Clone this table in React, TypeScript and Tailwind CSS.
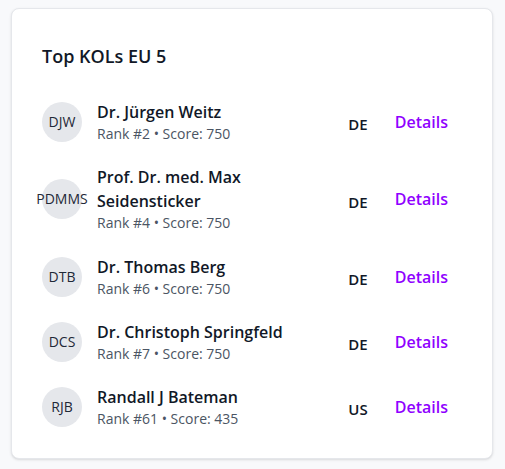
const kols = [
  { initials: "DJW", name: "Dr. Jürgen Weitz", rank: 2, score: 750, country: "DE" },
  { initials: "PDMMS", name: "Prof. Dr. med. Max Seidensticker", rank: 4, score: 750, country: "DE" },
  { initials: "DTB", name: "Dr. Thomas Berg", rank: 6, score: 750, country: "DE" },
  { initials: "DCS", name: "Dr. Christoph Springfeld", rank: 7, score: 750, country: "DE" },
  { initials: "RJB", name: "Randall J Bateman", rank: 61, score: 435, country: "US" },
]

export default function App() {
  return (
    <div className="min-h-screen bg-[#f8f9fb] pt-2 pl-[11px] pr-3 font-['Open_Sans',sans-serif]">
      <div className="rounded-lg border border-[#e5e7eb] bg-white pt-[33px] pb-[29px] pl-[30px] pr-[44px] shadow-sm">
        <h2 className="text-lg leading-7 font-semibold text-[#111827]">Top KOLs EU 5</h2>

        <div className="mt-[30px] flex flex-col gap-[21.25px]">
          {kols.map((kol) => (
            <div key={kol.initials} className="flex items-center">
              <div className="flex h-10 w-10 shrink-0 items-center justify-center rounded-full bg-[#e5e7eb] text-sm text-[#1f2937]">
                <span className="whitespace-nowrap">{kol.initials}</span>
              </div>
              <div className="ml-[15px] min-w-0 flex-1 pr-4">
                <div className="max-w-[190px] text-base leading-6 font-semibold text-[#111827]">{kol.name}</div>
                <div className="text-sm leading-5 text-[#4b5563]">
                  Rank #{kol.rank} • Score: {kol.score}
                </div>
              </div>
              <span className="mt-[5px] text-[15px] font-semibold text-[#111827]">{kol.country}</span>
              <button className="ml-[27px] text-base font-semibold text-[#8f00ff]">Details</button>
            </div>
          ))}
        </div>
      </div>
    </div>
  )
}
